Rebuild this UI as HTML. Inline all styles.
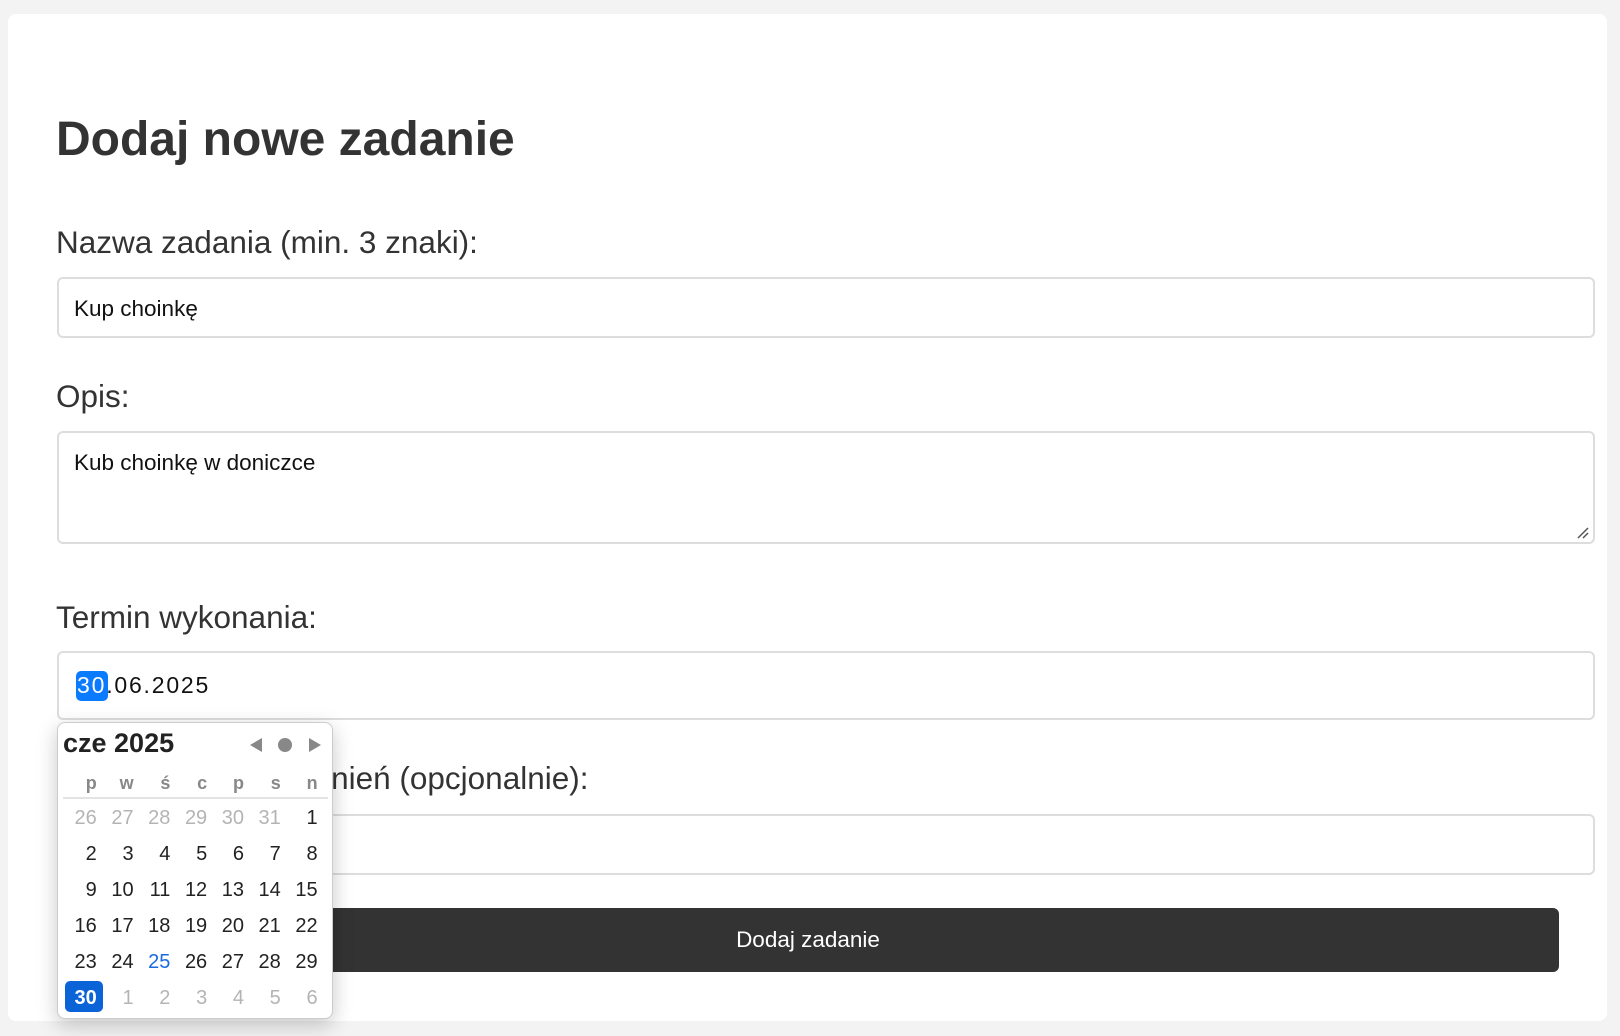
<!DOCTYPE html>
<html><head><meta charset="utf-8"><style>
*{box-sizing:border-box;margin:0;padding:0}
body{width:1620px;height:1036px;background:#f3f3f3;font-family:"Liberation Sans",Arial,sans-serif;color:#333;position:relative;overflow:hidden}
.card{position:absolute;left:8px;top:14px;width:1599px;height:1007px;background:#fff;border-radius:8px}
.abs{position:absolute}
h1{position:absolute;left:56px;top:112px;font-size:48px;font-weight:bold;color:#333}
.lbl{position:absolute;left:56px;font-size:31.5px;color:#333}
.inp{position:absolute;left:57px;width:1538px;border:2px solid #ddd;border-radius:6px;background:#fff}
.txt{position:absolute;left:74px;font-size:22.5px;color:#111}
.btn{position:absolute;left:57px;top:908px;width:1502px;height:64px;background:#333;border-radius:6px;color:#fff;font-size:22.5px;text-align:center;line-height:64px}
.pop{position:absolute;left:57px;top:722px;width:276px;height:297px;background:#fff;border:1px solid #ccc;border-radius:8px;box-shadow:0 6px 20px rgba(0,0,0,.22);font-size:20px}
.row{position:absolute;left:2px;height:36px;line-height:36px;display:flex}
.row span{width:36.8px;text-align:right;color:#222}
.g{color:#b4b4b4!important}
.wd span{color:#888;font-weight:bold;font-size:18px}
</style></head><body>
<div class="card"></div>
<h1>Dodaj nowe zadanie</h1>
<div class="lbl" style="top:224px">Nazwa zadania (min. 3 znaki):</div>
<div class="inp" style="top:277px;height:61px"></div>
<div class="txt" style="top:296px">Kup choinkę</div>
<div class="lbl" style="top:378px">Opis:</div>
<div class="inp" style="top:431px;height:113px"></div>
<div class="txt" style="top:450px">Kub choinkę w doniczce</div>
<svg class="abs" style="left:1576px;top:526px" width="14" height="14"><path d="M2 12L12 2M7 12L12 7" stroke="#555" stroke-width="1.5"/></svg>
<div class="lbl" style="top:599px">Termin wykonania:</div>
<div class="inp" style="top:651px;height:69px"></div>
<div class="abs" style="left:76px;top:671px;width:32px;height:30px;background:#0a7aff;border-radius:5px"></div>
<div class="abs" style="left:77px;top:672px;font-size:23px;letter-spacing:1.8px;color:#111"><span style="color:#fff">30</span>.06.2025</div>
<div class="lbl" style="top:760px;text-indent:79px">Data przypomnień (opcjonalnie):</div>
<div class="inp" style="top:814px;height:61px"></div>
<div class="btn">Dodaj zadanie</div>
<div class="pop">
 <div class="abs" style="left:5px;top:5px;font-size:27px;font-weight:bold;color:#222">cze 2025</div>
 <svg class="abs" style="left:192px;top:14px" width="80" height="16"><path d="M0 8L12 1V15Z" fill="#888"/><circle cx="35" cy="8" r="7" fill="#888"/><path d="M59 1L71 8L59 15Z" fill="#888"/></svg>
 <div class="row wd" style="top:42px"><span>p</span><span>w</span><span>ś</span><span>c</span><span>p</span><span>s</span><span>n</span></div>
 <div class="abs" style="left:5px;top:74px;width:265px;height:2px;background:#e3e3e3"></div>
 <div class="row" style="top:77px"><span class="g">26</span><span class="g">27</span><span class="g">28</span><span class="g">29</span><span class="g">30</span><span class="g">31</span><span>1</span></div>
 <div class="row" style="top:113px"><span>2</span><span>3</span><span>4</span><span>5</span><span>6</span><span>7</span><span>8</span></div>
 <div class="row" style="top:149px"><span>9</span><span>10</span><span>11</span><span>12</span><span>13</span><span>14</span><span>15</span></div>
 <div class="row" style="top:185px"><span>16</span><span>17</span><span>18</span><span>19</span><span>20</span><span>21</span><span>22</span></div>
 <div class="row" style="top:221px"><span>23</span><span>24</span><span style="color:#1a6be0">25</span><span>26</span><span>27</span><span>28</span><span>29</span></div>
 <div class="abs" style="left:7px;top:258px;width:38px;height:31px;background:#0a64d8;border-radius:5px"></div>
 <div class="row" style="top:257px"><span style="color:#fff;font-weight:bold">30</span><span class="g">1</span><span class="g">2</span><span class="g">3</span><span class="g">4</span><span class="g">5</span><span class="g">6</span></div>
</div>
</body></html>
